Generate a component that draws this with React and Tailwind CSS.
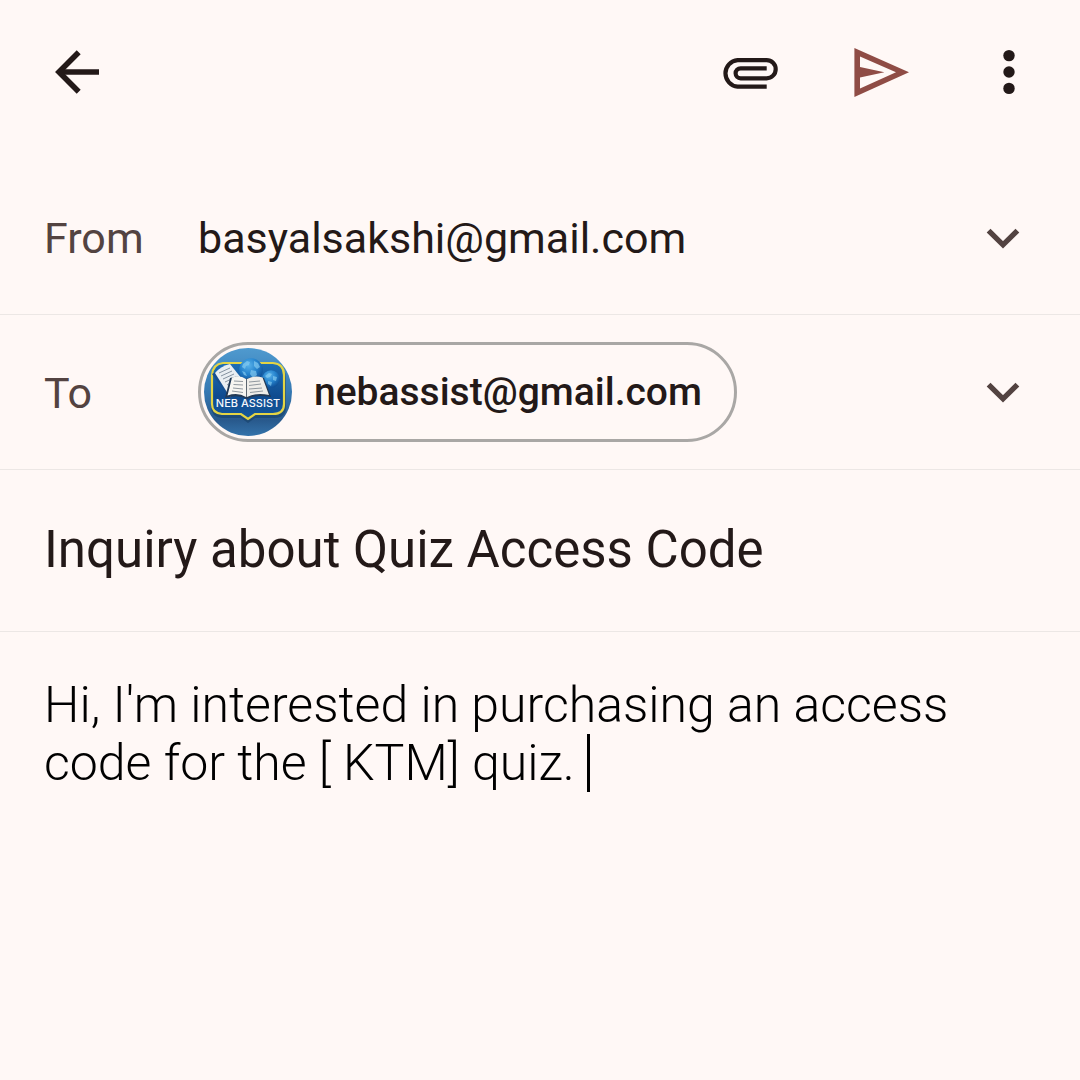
import { useState } from "react";

function BackIcon() {
  return (
    <svg viewBox="0 0 48 48" className="size-12" fill="none" stroke="currentColor" strokeWidth="5.6" aria-hidden="true">
      <path d="M46 24H7" />
      <path d="M25.7 4.3L6 24L25.7 43.7" />
    </svg>
  );
}

function AttachIcon() {
  return (
    <svg viewBox="0 0 56 48" className="h-12 w-14" fill="none" stroke="currentColor" strokeWidth="4.2" aria-hidden="true">
      <path d="M44.7 38.6H15.6a13.3 13.3 0 0 1 0-26.5H44.6a9.1 9.1 0 0 1 0 18.2H18.6a5 5 0 0 1 0-10H44.7" />
    </svg>
  );
}

function SendIcon() {
  return (
    <svg viewBox="0 0 56 50" className="h-[50px] w-14" fill="currentColor" aria-hidden="true">
      <path fillRule="evenodd" d="M.4 0L55 24.3L.4 49ZM6 8.6V18.9L30.4 24.3L6 29.5V40.6L42 24.3Z" />
    </svg>
  );
}

function MoreIcon() {
  return (
    <svg viewBox="0 0 12 48" className="h-12 w-3" fill="currentColor" aria-hidden="true">
      <circle cx="6" cy="7.6" r="5.7" />
      <circle cx="6" cy="24" r="5.7" />
      <circle cx="6" cy="40.4" r="5.7" />
    </svg>
  );
}

function ChevronIcon() {
  return (
    <svg viewBox="0 0 34 22" className="h-[22px] w-[34px]" fill="none" stroke="currentColor" strokeWidth="5.4" aria-hidden="true">
      <path d="M2.6 3.6L17 17.8L31.4 3.6" />
    </svg>
  );
}

function Avatar() {
  return (
    <svg viewBox="0 0 88 88" className="size-[88px] shrink-0 rounded-full" role="img" aria-label="NEB Assist">
      <defs>
        <linearGradient id="sky" x1="0" y1="0" x2="0" y2="1">
          <stop offset="0" stopColor="#4f9acf" />
          <stop offset="0.5" stopColor="#3578b2" />
          <stop offset="0.82" stopColor="#28598c" />
          <stop offset="1" stopColor="#3473ab" />
        </linearGradient>
        <linearGradient id="panel" x1="0" y1="0" x2="0" y2="1">
          <stop offset="0" stopColor="#1e6fb5" />
          <stop offset="0.6" stopColor="#0f4b8f" />
          <stop offset="1" stopColor="#14589c" />
        </linearGradient>
        <radialGradient id="globe" cx="0.4" cy="0.3" r="0.75">
          <stop offset="0" stopColor="#59b2ea" />
          <stop offset="0.5" stopColor="#2583cd" />
          <stop offset="1" stopColor="#0c4a91" />
        </radialGradient>
      </defs>
      <rect width="88" height="88" fill="url(#sky)" />
      <path d="M19 18H70Q82 19 82 30V59Q82 70 70 70H51L44 75L37 70H18Q7 69 7 59V29Q8 19 19 18Z" fill="#12395f" opacity=".5" />
      <path d="M19 15H69Q80 16 80 27V56Q80 66 69 66H51L44 71L37 66H18Q8 65 8 56V27Q9 16 19 15Z" fill="url(#panel)" stroke="#e3d444" strokeWidth="2.2" />
      <circle cx="47" cy="22" r="11.8" fill="url(#globe)" />
      <path d="M39 16l4-3 3 1-1 3-3 1-1 3-3-2zM50 13l4 2 2 4-3 2-3-3zM47 22l5 1 1 4-4 3-3-4zM38 23l3 1 2 4-3-1z" fill="#8bd0f3" opacity=".65" />
      <circle cx="67" cy="31" r="8.8" fill="url(#globe)" />
      <path d="M61 28l4-3 3 1-2 3-3 1zM69 28l4 1-1 4-3-1zM64 33l4 1-1 4-3-2z" fill="#8bd0f3" opacity=".65" />
      <path d="M8 26L27 52L30 47L12 24Z" fill="#174f8f" />
      <path d="M11 25Q17 18 26 16L38 31L26 49Z" fill="#e9eef2" />
      <path d="M15 25L26 20M17 28L28 23M19 31L30 26M21 34L32 29M23 37L31 32M25 40L29 37" stroke="#8492a0" strokeWidth="1" />
      <path d="M21 50L26 30Q35 27 42 31Q51 27 60 30L67 49Q53 46 43 51Q34 46 21 50Z" fill="#233a55" />
      <path d="M23.500 47.500L28 29.500Q36 27 42 31V49Q34 44 23.500 47.500Z" fill="#f6f5f1" />
      <path d="M43 31Q50 27 58.500 29.500L65 47Q53 44 43 49Z" fill="#eeede9" />
      <path d="M30 33L39 33.500M29.500 36.500L39 37M29 40L39 41M28 43L39 44.500M45 34L56 33M45 37.500L57 36M45 41L58 40M46 44.500L59 43" stroke="#8f979e" strokeWidth="1" fill="none" />
      <path d="M42.500 31V49" stroke="#5c6670" strokeWidth="1" />
      <text x="44" y="59" textAnchor="middle" fontFamily="Inter, sans-serif" fontSize="11" fontWeight="500" fill="#f4f7fb">
        NEB ASSIST
      </text>
    </svg>
  );
}

export default function App() {
  const [subject, setSubject] = useState("Inquiry about Quiz Access Code");
  const [body, setBody] = useState("Hi, I'm interested in purchasing an access code for the [ KTM] quiz. ");

  return (
    <main className="min-h-screen bg-[#fff8f6] font-['Roboto',sans-serif] text-[#231918]">
      <header className="flex h-40 items-start justify-between pt-12 pr-[65px] pl-[53px]">
        <button type="button" aria-label="Back">
          <BackIcon />
        </button>
        <div className="flex items-start">
          <button type="button" aria-label="Attach file" className="mr-[76px]">
            <AttachIcon />
          </button>
          <button type="button" aria-label="Send" className="mr-[93px] text-[#8f4c45]">
            <SendIcon />
          </button>
          <button type="button" aria-label="More options">
            <MoreIcon />
          </button>
        </div>
      </header>

      <div className="flex h-[155px] items-center border-b border-[#ece7e5] pt-0.5 pr-[60px] pl-11 text-[43px]">
        <label htmlFor="from" className="w-[154px] shrink-0 text-[#534341]">
          From
        </label>
        <select id="from" className="min-w-0 flex-1 appearance-none bg-transparent outline-none">
          <option>basyalsakshi@gmail.com</option>
        </select>
        <span className="pointer-events-none text-[#534341]">
          <ChevronIcon />
        </span>
      </div>

      <div className="flex h-[155px] items-center border-b border-[#ece7e5] pr-[60px] pl-11">
        <span className="w-[154px] shrink-0 pt-0.5 text-[43px] text-[#534341]">To</span>
        <button
          type="button"
          className="flex h-[100px] items-center gap-[22px] rounded-full border-3 border-[#a9a7a5] pr-8 pl-[3px] text-[39px] font-medium"
        >
          <Avatar />
          nebassist@gmail.com
        </button>
        <button type="button" aria-label="Add Cc or Bcc" className="ml-auto text-[#534341]">
          <ChevronIcon />
        </button>
      </div>

      <div className="flex h-[162px] items-center border-b border-[#ece7e5] px-11">
        <input
          aria-label="Subject"
          value={subject}
          onChange={(e) => setSubject(e.target.value)}
          className="w-full bg-transparent text-[51px] outline-none"
        />
      </div>

      <div className="grid px-11 pt-11 text-[50px] leading-[58px] font-light text-black">
        <textarea
          aria-label="Message"
          value={body}
          onChange={(e) => setBody(e.target.value)}
          className="col-start-1 row-start-1 resize-none overflow-hidden bg-transparent caret-transparent outline-none"
        />
        <div aria-hidden="true" className="pointer-events-none col-start-1 row-start-1 whitespace-pre-wrap">
          <span className="invisible">{body}</span>
          <span className="inline-block h-[58px] w-[3px] bg-black align-bottom" />
        </div>
      </div>
    </main>
  );
}
